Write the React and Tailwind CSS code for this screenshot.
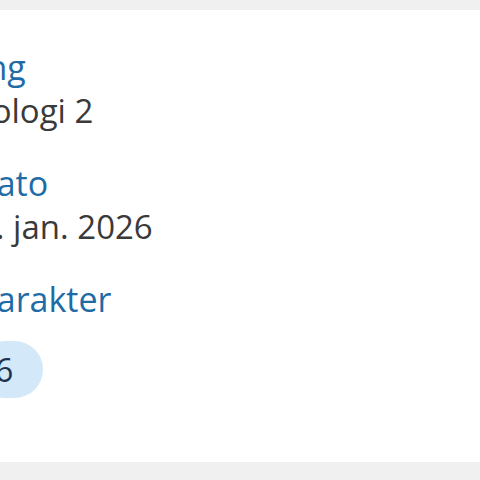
// Kort med vurderingsdetaljer, vist som et utsnitt (venstre kant er kuttet)
const label = 'text-[34px] leading-[43px] text-[#1e6ba6] whitespace-nowrap'
const value = 'text-[33px] leading-[43px] text-[#3a3a3a] whitespace-nowrap'

export default function App() {
  return (
    <div className="w-[480px] h-[480px] bg-[#f0f0f0] pt-[10px] overflow-hidden" style={{ fontFamily: '"Open Sans", sans-serif' }}>
      <div className="h-[452px] bg-white overflow-hidden pt-[36px]">
        <div className="ml-[-23px] flex flex-col gap-[30px]">
          <div className="flex flex-col items-start">
            <span className={`${label} ml-[-108px]`}>Vurdering</span>
            <span className={`${value} ml-[-15px]`}>Biologi 2</span>
          </div>
          <div className="flex flex-col items-start">
            <span className={`${label} ml-[-5px]`}>Dato</span>
            <span className={value}>1. jan. 2026</span>
          </div>
          <div className="flex flex-col items-start gap-[20px]">
            <span className={`${label} ml-[-1px]`}>Karakter</span>
            <span className="h-[57px] rounded-full bg-[#d3e8f9] text-[#1c3350] text-[32px] pl-[18px] pr-[30px] flex items-center">6</span>
          </div>
        </div>
      </div>
    </div>
  )
}
